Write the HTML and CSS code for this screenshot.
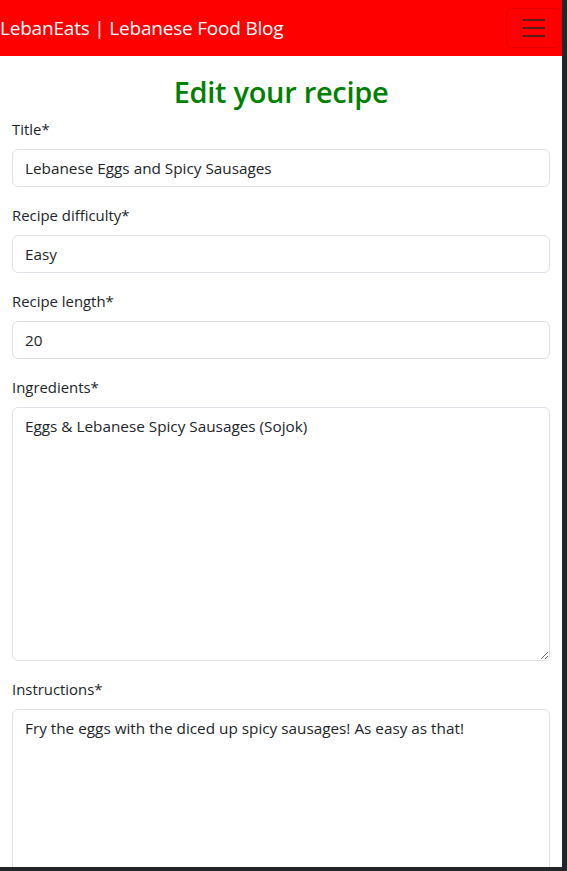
FILE: index.html
```html
<!DOCTYPE html>
<html lang="en">
<head>
<meta charset="utf-8">
<title>LebanEats | Edit recipe</title>
<link rel="stylesheet" href="styles.css">
</head>
<body>
<div class="page">
  <nav class="navbar">
    <a class="brand" href="#">LebanEats | Lebanese Food Blog</a>
    <button class="toggler" type="button" aria-label="Toggle navigation">
      <svg class="toggler-icon" viewBox="0 0 30 30" width="30" height="30">
        <path d="M4 7h22M4 15h22M4 23h22" stroke="rgba(33,37,41,0.75)" stroke-width="2" stroke-linecap="butt" fill="none"/>
      </svg>
    </button>
  </nav>
  <main class="container">
    <h1 class="heading">Edit your recipe</h1>
    <form class="form">
      <div class="field">
        <label class="label" for="title">Title*</label>
        <input class="control" id="title" type="text" value="Lebanese Eggs and Spicy Sausages">
      </div>
      <div class="field">
        <label class="label" for="difficulty">Recipe difficulty*</label>
        <input class="control" id="difficulty" type="text" value="Easy">
      </div>
      <div class="field">
        <label class="label" for="length">Recipe length*</label>
        <input class="control" id="length" type="text" value="20">
      </div>
      <div class="field">
        <label class="label" for="ingredients">Ingredients*</label>
        <textarea class="control area" id="ingredients">Eggs &amp; Lebanese Spicy Sausages (Sojok)</textarea>
      </div>
      <div class="field">
        <label class="label" for="instructions">Instructions*</label>
        <textarea class="control area" id="instructions">Fry the eggs with the diced up spicy sausages! As easy as that!</textarea>
      </div>
    </form>
  </main>
</div>
</body>
</html>
```
FILE: styles.css
```css
* { box-sizing: border-box; }
html, body { margin: 0; padding: 0; }
body {
  background: #232629;
  width: 567px;
  height: 871px;
  overflow: hidden;
  font-family: "Open Sans", "Noto Sans", sans-serif;
  color: #212529;
}
.page {
  width: 562px;
  height: 867px;
  overflow: hidden;
  background: #ffffff;
}
.navbar {
  height: 56px;
  background: #ff0000;
  display: flex;
  align-items: center;
  justify-content: space-between;
  padding: 8px 0 8px 0;
}
.brand {
  color: #ffffff;
  text-decoration: none;
  font-size: 19px;
  line-height: 30px;
  white-space: nowrap;
  letter-spacing: -0.2px;
}
.toggler {
  width: 56px;
  height: 40px;
  padding: 4px 12px;
  background: transparent;
  border: 1px solid rgba(0, 0, 0, 0.1);
  border-radius: 6px;
  display: flex;
  align-items: center;
  justify-content: center;
}
.toggler-icon { display: block; }
.container {
  padding: 18px 12px 0 12px;
}
.heading {
  margin: 0 0 7px 0;
  text-align: center;
  color: #008000;
  font-size: 29px;
  font-weight: 600;
  line-height: 36px;
  letter-spacing: -0.3px;
}
.form {
  display: flex;
  flex-direction: column;
  gap: 16px;
}
.field {
  display: flex;
  flex-direction: column;
}
.label {
  font-size: 14.9px;
  line-height: 24px;
  margin-bottom: 8px;
}
.control {
  width: 538px;
  height: 38px;
  padding: 6px 12px;
  border: 1px solid #dee2e6;
  border-radius: 6px;
  font-family: inherit;
  font-size: 15.3px;
  line-height: 24px;
  color: #212529;
  background: #ffffff;
  outline: none;
}
.area {
  height: 254px;
  resize: vertical;
  display: block;
}
```
